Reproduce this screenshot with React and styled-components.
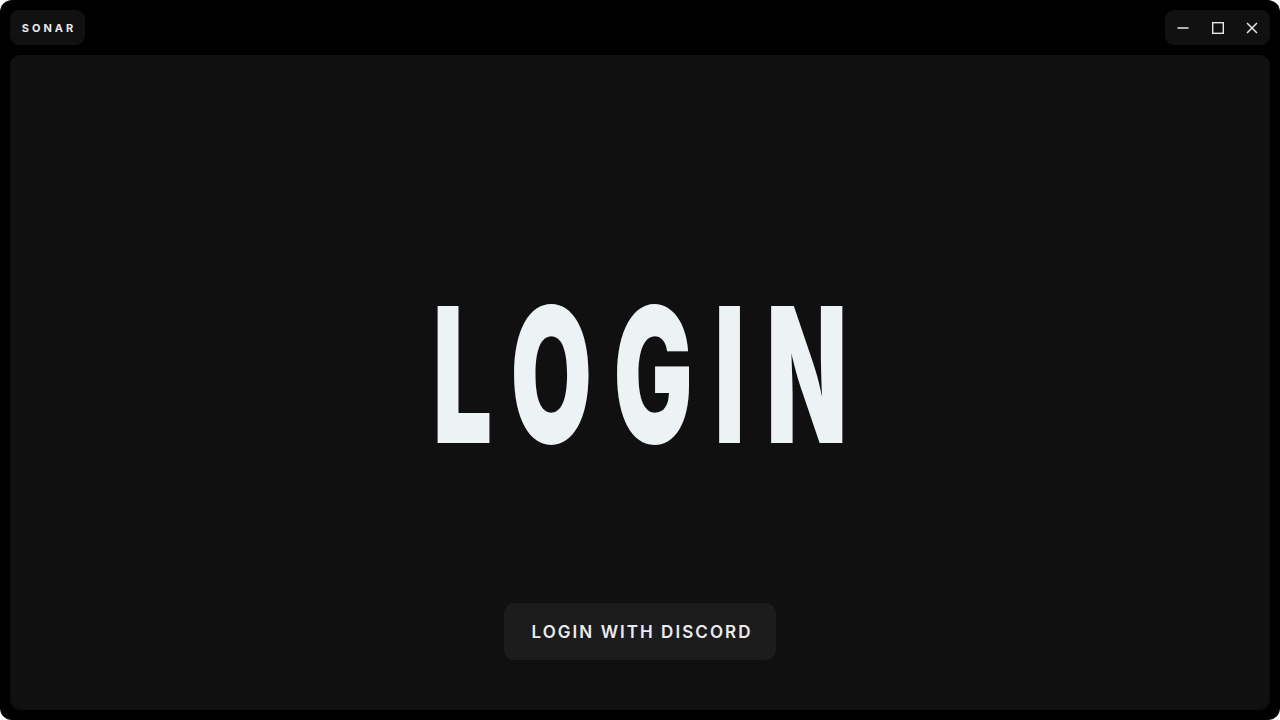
import React from "react";
import styled, { createGlobalStyle } from "styled-components";

const Global = createGlobalStyle`
  html, body { margin: 0; padding: 0; background: #ffffff; }
  body { font-family: Inter, "Liberation Sans", sans-serif; }
  * { box-sizing: border-box; }
`;

const Window = styled.div`
  width: 1280px;
  height: 720px;
  background: #000000;
  border-radius: 12px;
  padding: 10px;
  display: flex;
  flex-direction: column;
  gap: 10px;
  overflow: hidden;
`;

const TitleBar = styled.header`
  height: 35px;
  display: flex;
  align-items: stretch;
  justify-content: space-between;
`;

const Chip = styled.div`
  background: #111111;
  border-radius: 9px;
  display: flex;
  align-items: center;
`;

const Brand = styled(Chip)`
  width: 75px;
  justify-content: center;
  padding-left: 3px;
  color: #e9e9ee;
  font-family: Inter, "Liberation Sans", sans-serif;
  font-weight: 700;
  font-size: 11px;
  letter-spacing: 3px;
`;

const Controls = styled(Chip)`
  width: 105px;
  justify-content: space-between;
  padding: 0 6px;
`;

const CtrlButton = styled.button`
  width: 24px;
  height: 24px;
  border: 0;
  padding: 0;
  background: transparent;
  color: #e6e6e6;
  display: flex;
  align-items: center;
  justify-content: center;
  cursor: pointer;
`;

const Main = styled.main`
  flex: 1;
  background: #101010;
  border-radius: 10px;
  display: flex;
  flex-direction: column;
  align-items: center;
  padding-bottom: 50px;
`;

const Title = styled.h1`
  margin: 226px 0 0;
  padding-left: 38px;
  font-family: Inter, "Liberation Sans", sans-serif;
  font-weight: 900;
  font-size: 188px;
  line-height: 1;
  color: #edf2f5;
  letter-spacing: 38px;
  transform: scaleX(0.56);
  white-space: nowrap;
`;

const DiscordButton = styled.button`
  margin-top: auto;
  width: 272px;
  height: 57px;
  border: 0;
  border-radius: 10px;
  background: #1c1c1c;
  color: #ebebef;
  font-family: Inter, "Liberation Sans", sans-serif;
  font-weight: 600;
  font-size: 17px;
  letter-spacing: 2.05px;
  padding: 0 0 0 4px;
  cursor: pointer;
`;

const Minimize = () => (
  <svg width="14" height="14" viewBox="0 0 14 14" fill="none" stroke="currentColor" strokeWidth="1.4">
    <path d="M1.5 7h11" />
  </svg>
);
const Maximize = () => (
  <svg width="14" height="14" viewBox="0 0 14 14" fill="none" stroke="currentColor" strokeWidth="1.4">
    <rect x="1.7" y="1.7" width="10.6" height="10.6" />
  </svg>
);
const Close = () => (
  <svg width="14" height="14" viewBox="0 0 14 14" fill="none" stroke="currentColor" strokeWidth="1.5">
    <path d="M2 2l10 10M12 2L2 12" />
  </svg>
);

export default function App() {
  return (
    <>
      <Global />
      <Window>
        <TitleBar>
          <Brand>SONAR</Brand>
          <Controls>
            <CtrlButton aria-label="Minimize"><Minimize /></CtrlButton>
            <CtrlButton aria-label="Maximize"><Maximize /></CtrlButton>
            <CtrlButton aria-label="Close"><Close /></CtrlButton>
          </Controls>
        </TitleBar>
        <Main>
          <Title>LOGIN</Title>
          <DiscordButton>LOGIN WITH DISCORD</DiscordButton>
        </Main>
      </Window>
    </>
  );
}
